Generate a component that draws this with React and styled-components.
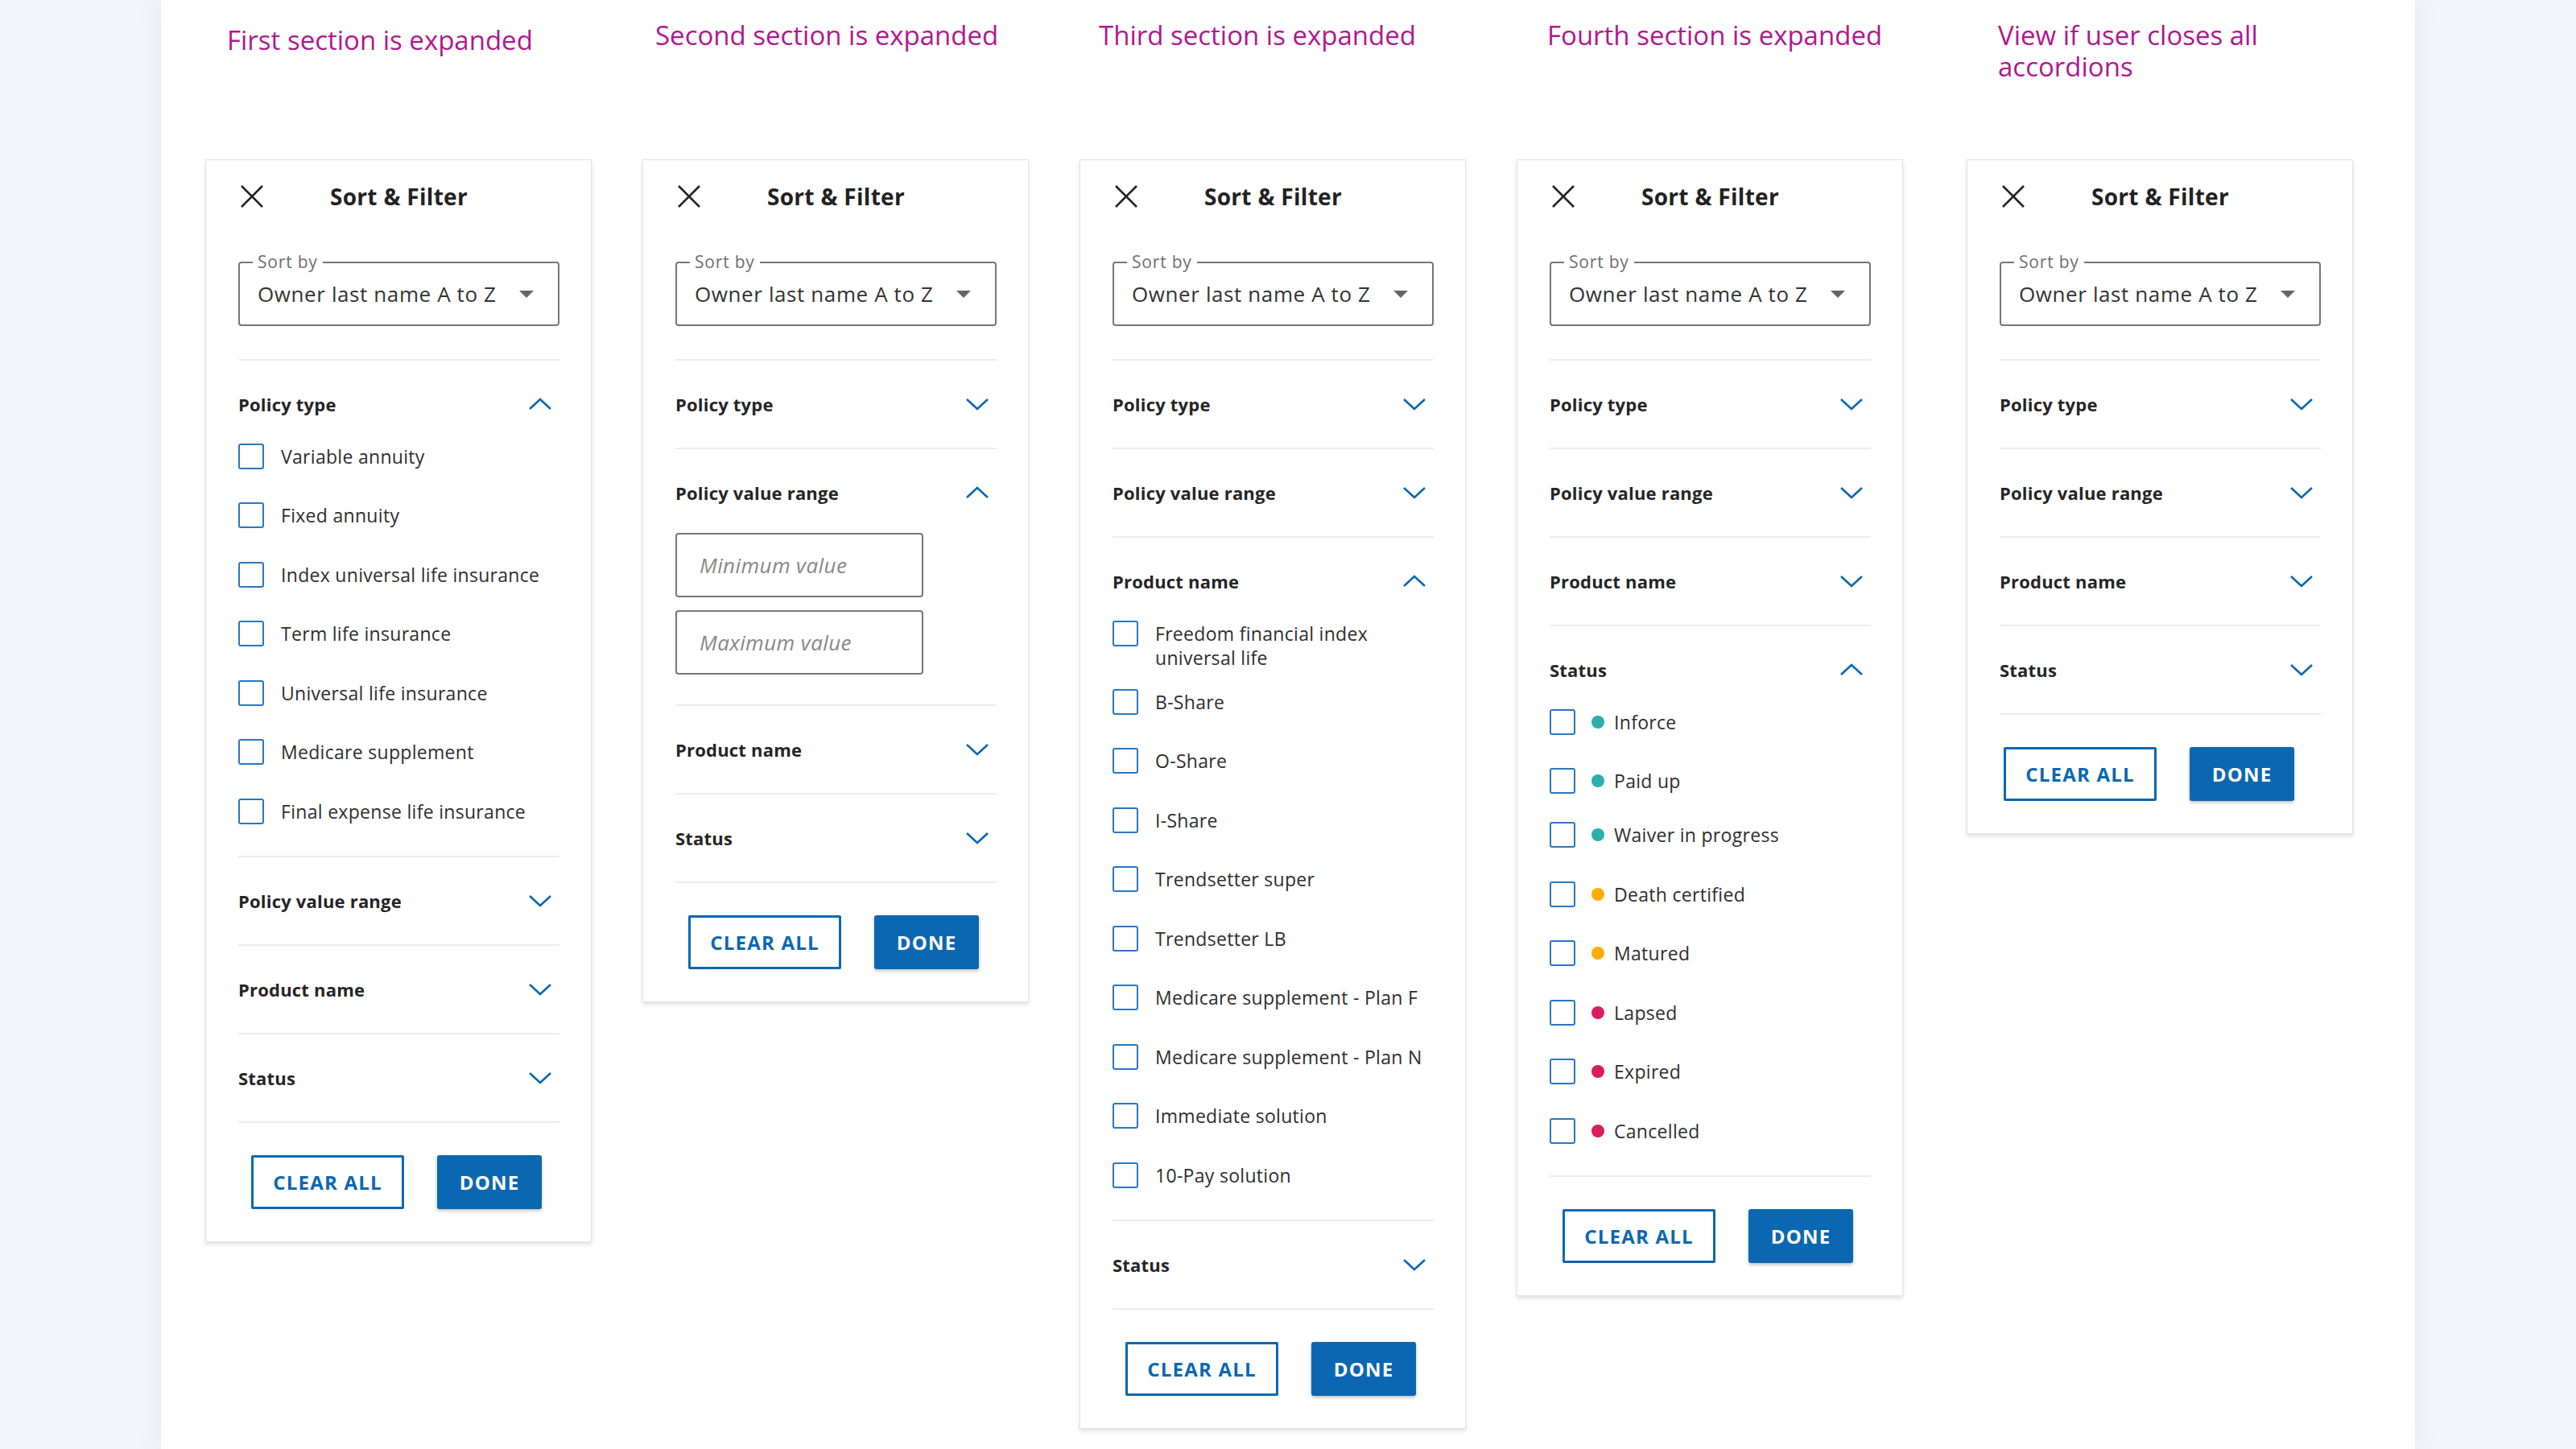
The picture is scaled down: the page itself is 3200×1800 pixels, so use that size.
import styled, { createGlobalStyle } from 'styled-components';

// --- DATA ---
const TEAL = '#2bb0ab';
const AMBER = '#ffad00';
const ROSE = '#dc1d5b';

const POLICY_TYPES = [
  { label: 'Variable annuity' },
  { label: 'Fixed annuity' },
  { label: 'Index universal life insurance' },
  { label: 'Term life insurance' },
  { label: 'Universal life insurance' },
  { label: 'Medicare supplement' },
  { label: 'Final expense life insurance' },
];

const PRODUCTS = [
  { label: 'Freedom financial index\nuniversal life', h: 85 },
  { label: 'B-Share' },
  { label: 'O-Share' },
  { label: 'I-Share' },
  { label: 'Trendsetter super' },
  { label: 'Trendsetter LB' },
  { label: 'Medicare supplement - Plan F' },
  { label: 'Medicare supplement - Plan N' },
  { label: 'Immediate solution' },
  { label: '10-Pay solution' },
];

const STATUSES = [
  { label: 'Inforce', dot: TEAL },
  { label: 'Paid up', dot: TEAL, h: 67 },
  { label: 'Waiver in progress', dot: TEAL },
  { label: 'Death certified', dot: AMBER },
  { label: 'Matured', dot: AMBER },
  { label: 'Lapsed', dot: ROSE },
  { label: 'Expired', dot: ROSE },
  { label: 'Cancelled', dot: ROSE },
];

const VIEWS = [
  { caption: ['First section is expanded'], open: 'type', top: 30, indent: 27 },
  { caption: ['Second section is expanded'], open: 'value', top: 24, indent: 16 },
  { caption: ['Third section is expanded'], open: 'product', top: 24, indent: 24 },
  { caption: ['Fourth section is expanded'], open: 'status', top: 24, indent: 38 },
  { caption: ['View if user closes all', 'accordions'], open: null, top: 24, indent: 39, push: 16, footer: 5 },
];

// --- STYLED COMPONENTS ---
const GlobalStyle = createGlobalStyle`
  body {
    margin: 0;
    background: #f4f5fa;
    font-family: "Open Sans", "Liberation Sans", sans-serif;
    color: #2b2b2b;
  }
  * { box-sizing: border-box; }
`;

const Page = styled.div`
  display: flex;
  justify-content: center;
  min-height: 1800px;
`;

const Artboard = styled.main`
  width: 2800px;
  min-height: 1800px;
  background: #fff;
  box-shadow: 0 0 30px rgba(40, 50, 100, 0.08);
  display: flex;
  align-items: flex-start;
  gap: 63px;
  padding-left: 55px;
`;

const Column = styled.section`
  width: 480px;
  flex: none;
  margin-left: ${p => p.$push || 0}px;
`;

const Caption = styled.h2`
  margin: 0;
  height: 198px;
  padding: ${p => p.$top}px 0 0 ${p => p.$indent}px;
  font-size: 33px;
  line-height: 39px;
  font-weight: 400;
  color: #b1178f;
  white-space: nowrap;
`;

const Panel = styled.div`
  width: 480px;
  background: #fff;
  border: 1px solid #e4e4e4;
  box-shadow: 0 3px 5px rgba(0, 0, 0, 0.12);
`;

const PanelHeader = styled.header`
  height: 90px;
  display: flex;
  align-items: center;
  padding-left: 41px;
`;

const CloseButton = styled.button`
  width: 32px;
  height: 32px;
  padding: 0;
  border: none;
  background: none;
  display: flex;
  align-items: center;
  justify-content: center;
  cursor: pointer;
`;

const PanelTitle = styled.h3`
  margin: 0 0 0 81px;
  font-size: 28px;
  font-weight: 700;
  color: #222;
  letter-spacing: 0.3px;
`;

const SortField = styled.div`
  position: relative;
  margin: 36px 39px 0 40px;
  height: 80px;
  border: 2px solid #777;
  border-radius: 4px;
  display: flex;
  align-items: center;
  justify-content: space-between;
  padding: 0 30px 0 22px;
`;

const SortLabel = styled.span`
  position: absolute;
  top: -15px;
  left: 16px;
  padding: 0 6px;
  background: #fff;
  font-size: 21px;
  line-height: 26px;
  color: #6f6f6f;
  letter-spacing: 0.8px;
`;

const SortValue = styled.span`
  font-size: 26px;
  color: #333;
  letter-spacing: 0.6px;
`;

const Caret = styled.span`
  width: 0;
  height: 0;
  border-left: 9px solid transparent;
  border-right: 9px solid transparent;
  border-top: 9px solid #666;
`;

const Accordion = styled.div`
  margin: 41px 39px 0 40px;
  border-top: 2px solid #ededed;
`;

const Section = styled.div`
  border-bottom: 2px solid #ededed;
`;

const SectionHeader = styled.div`
  display: flex;
  align-items: center;
  justify-content: space-between;
  padding: 35px 9px ${p => (p.$open ? 0 : 35)}px 0;
  cursor: pointer;
`;

const SectionTitle = styled.span`
  font-size: 22px;
  line-height: 38px;
  font-weight: 700;
  color: #252525;
  letter-spacing: 0.2px;
`;

const ChevronSvg = styled.svg`
  width: 30px;
  height: 16px;
  fill: none;
  stroke: #0b67b2;
  stroke-width: 2.6;
`;

const OptionList = styled.div`
  padding: 9px 0 18px;
`;

const OptionRow = styled.label`
  display: flex;
  align-items: flex-start;
  height: ${p => p.$h || 73.5}px;
  padding-top: 20.75px;
  cursor: pointer;
`;

const Box = styled.span`
  width: 32px;
  height: 32px;
  flex: none;
  border: 2px solid #2a77c3;
  border-radius: 3px;
  background: #fff;
`;

const Dot = styled.span`
  width: 16px;
  height: 16px;
  flex: none;
  margin: 8px 0 0 20px;
  border-radius: 50%;
  background: ${p => p.$color};
`;

const OptionText = styled.span`
  margin: 1px 0 0 ${p => (p.$dotted ? 12 : 21)}px;
  font-size: 23px;
  line-height: 30px;
  color: #2e2e2e;
  letter-spacing: 0.3px;
  white-space: pre-line;
`;

const RangeFields = styled.div`
  display: flex;
  flex-direction: column;
  gap: 16px;
  padding: 31px 0 37px;
`;

const RangeInput = styled.input`
  width: 308px;
  height: 80px;
  border: 2px solid #777;
  border-radius: 4px;
  padding: 0 0 0 28px;
  font-family: "Open Sans", "Liberation Sans", sans-serif;
  font-size: 26px;
  color: #333;
  letter-spacing: 0.4px;
  &::placeholder {
    font-style: italic;
    color: #888;
  }
`;

const Footer = styled.footer`
  display: flex;
  gap: 41px;
  padding: 40px 0 40px ${p => 40 + (p.$indent ?? 16)}px;
`;

const OutlineButton = styled.button`
  width: 190px;
  height: 67px;
  border: 3px solid #0b67b2;
  border-radius: 2px;
  background: #fff;
  color: #0b67b2;
  font-family: "Open Sans", "Liberation Sans", sans-serif;
  font-size: 24px;
  font-weight: 700;
  letter-spacing: 1.2px;
  cursor: pointer;
`;

const SolidButton = styled.button`
  width: 130px;
  height: 67px;
  border: none;
  border-radius: 3px;
  background: #0b67b2;
  color: #fff;
  font-family: "Open Sans", "Liberation Sans", sans-serif;
  font-size: 24px;
  font-weight: 700;
  letter-spacing: 1.2px;
  box-shadow: 0 2px 4px rgba(0, 0, 0, 0.25);
  cursor: pointer;
`;

// --- PIECES ---
function CloseIcon() {
  return (
    <svg width="30" height="30" viewBox="0 0 30 30" fill="none" stroke="#222" strokeWidth="2.6">
      <line x1="2" y1="2" x2="28" y2="28" />
      <line x1="28" y1="2" x2="2" y2="28" />
    </svg>
  );
}

function Chevron({ up }) {
  return (
    <ChevronSvg viewBox="0 0 30 16">
      <polyline points={up ? '2,14 15,2 28,14' : '2,2 15,14 28,2'} />
    </ChevronSvg>
  );
}

function Options({ items }) {
  return (
    <OptionList>
      {items.map(item => (
        <OptionRow key={item.label} $h={item.h}>
          <Box />
          {item.dot && <Dot $color={item.dot} />}
          <OptionText $dotted={!!item.dot}>{item.label}</OptionText>
        </OptionRow>
      ))}
    </OptionList>
  );
}

function AccordionSection({ title, open, children }) {
  return (
    <Section>
      <SectionHeader $open={open}>
        <SectionTitle>{title}</SectionTitle>
        <Chevron up={open} />
      </SectionHeader>
      {open && children}
    </Section>
  );
}

function FilterPanel({ open, footer }) {
  return (
    <Panel>
      <PanelHeader>
        <CloseButton aria-label="Close"><CloseIcon /></CloseButton>
        <PanelTitle>Sort &amp; Filter</PanelTitle>
      </PanelHeader>

      <SortField>
        <SortLabel>Sort by</SortLabel>
        <SortValue>Owner last name A to Z</SortValue>
        <Caret />
      </SortField>

      <Accordion>
        <AccordionSection title="Policy type" open={open === 'type'}>
          <Options items={POLICY_TYPES} />
        </AccordionSection>
        <AccordionSection title="Policy value range" open={open === 'value'}>
          <RangeFields>
            <RangeInput placeholder="Minimum value" />
            <RangeInput placeholder="Maximum value" />
          </RangeFields>
        </AccordionSection>
        <AccordionSection title="Product name" open={open === 'product'}>
          <Options items={PRODUCTS} />
        </AccordionSection>
        <AccordionSection title="Status" open={open === 'status'}>
          <Options items={STATUSES} />
        </AccordionSection>
      </Accordion>

      <Footer $indent={footer}>
        <OutlineButton>CLEAR ALL</OutlineButton>
        <SolidButton>DONE</SolidButton>
      </Footer>
    </Panel>
  );
}

export default function App() {
  return (
    <Page>
      <GlobalStyle />
      <Artboard>
        {VIEWS.map(view => (
          <Column key={view.caption[0]} $push={view.push}>
            <Caption $top={view.top} $indent={view.indent}>
              {view.caption.map(line => <div key={line}>{line}</div>)}
            </Caption>
            <FilterPanel open={view.open} footer={view.footer} />
          </Column>
        ))}
      </Artboard>
    </Page>
  );
}
